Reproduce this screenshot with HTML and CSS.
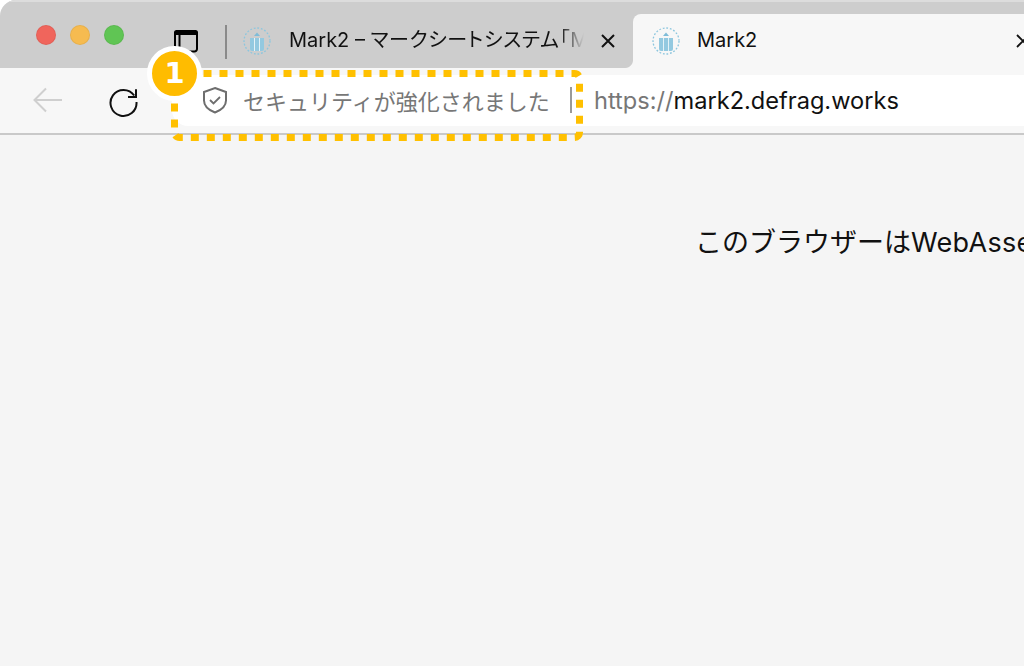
FILE: index.html
```html
<!DOCTYPE html>
<html lang="ja">
<head>
<meta charset="utf-8">
<title>Mark2</title>
<link rel="stylesheet" href="styles.css">
</head>
<body>
<div class="window">
  <header class="tabbar">
    <div class="lights">
      <span class="light red"></span>
      <span class="light yellow"></span>
      <span class="light green"></span>
    </div>
    <svg class="tabs-icon" width="26" height="26" viewBox="0 0 26 26"><path d="M1 7V4.500A2.500 2.500 0 0 1 3.500 2h19A2.500 2.500 0 0 1 25 4.500V7z" fill="#000"/><path d="M2 6v15a2.500 2.500 0 0 0 2.500 2.500h17A2.500 2.500 0 0 0 24 21V6M6.500 6v17.500" fill="none" stroke="#000" stroke-width="2"/></svg>
    <span class="tab-sep"></span>
    <div class="tab inactive">
      <svg class="favicon" width="30" height="30" viewBox="0 0 30 30"><use href="#fav"/></svg>
      <span class="tab-title fade">Mark2 – <span class="tab-ja">マークシートシステム「Mark2」</span></span>
      <svg class="close" width="18" height="18" viewBox="0 0 18 18"><path d="M3 3l12 12M15 3L3 15" stroke="#111" stroke-width="2" fill="none"/></svg>
    </div>
    <div class="tab active">
      <svg class="favicon" width="30" height="30" viewBox="0 0 30 30"><use href="#fav"/></svg>
      <span class="tab-title tab-title-active">Mark2</span>
      <svg class="close" width="18" height="18" viewBox="0 0 18 18"><path d="M3 3l12 12M15 3L3 15" stroke="#111" stroke-width="1.800" fill="none"/></svg>
    </div>
  </header>
  <nav class="toolbar">
    <svg class="nav-back" width="32" height="28" viewBox="0 0 32 28"><path d="M30 14H3M14 2.500L2.500 14 14 25.500" fill="none" stroke="#cfcfcf" stroke-width="2"/></svg>
    <svg class="nav-reload" width="32" height="32" viewBox="0 0 32 32"><path d="M27.200 10.500A13 13 0 1 0 29.500 17" fill="none" stroke="#111" stroke-width="2"/><path d="M29 4.300V12H21" fill="none" stroke="#111" stroke-width="2"/></svg>
    <div class="address">
      <svg class="shield" width="26" height="28" viewBox="0 0 26 28"><path d="M13 2l11 4v8.500c0 5.500-4.500 9.500-11 12-6.500-2.500-11-6.500-11-12V6z" fill="none" stroke="#6e6e6e" stroke-width="2"/><path d="M8 14l3.500 3.500L18 11" fill="none" stroke="#6e6e6e" stroke-width="1.800"/></svg>
      <span class="secure">セキュリティが強化されました</span>
      <span class="addr-sep"></span>
      <span class="url"><span class="scheme">https://</span>mark2.defrag.works</span>
    </div>
  </nav>
  <main class="content">
    <p class="message">このブラウザーは<span class="latin">WebAssembly</span>に対応していません。</p>
  </main>
</div>

<svg class="callout" width="413" height="73" viewBox="0 0 413 73"><rect x="3.500" y="3.500" width="405" height="64" rx="5" fill="none" stroke="#ffc000" stroke-width="7" stroke-dasharray="8 8" stroke-dashoffset="8"/></svg>
<div class="badge">1</div>

<svg class="defs" width="0" height="0">
  <defs>
    <g id="fav">
      <circle cx="15" cy="15" r="13" fill="none" stroke="#8cc6de" stroke-width="1.300" stroke-dasharray="1.800 1.800"/>
      <path d="M15 6.500l3 3.500h-6z" fill="#7fbcd8"/>
      <path d="M8 12h14v11a2 2 0 0 1-2 2H10a2 2 0 0 1-2-2z" fill="#93c9e0"/>
      <path d="M12.500 12v13M17.500 12v13" stroke="#e4f2f7" stroke-width="1"/>
    </g>
  </defs>
</svg>
</body>
</html>
```
FILE: styles.css
```css
* { box-sizing: border-box; }
html, body {
  margin: 0;
  height: 100%;
  background: #fff;
  overflow: hidden;
}
body {
  position: relative;
  width: 1024px;
  height: 666px;
  font-family: Inter, "Liberation Sans", "Noto Sans CJK JP", sans-serif;
  color: #111;
}
.window {
  display: flex;
  flex-direction: column;
  height: 666px;
  border-top-left-radius: 16px;
  overflow: hidden;
  background: #f5f5f5;
}
.tabbar {
  display: flex;
  align-items: stretch;
  height: 68px;
  flex: none;
  padding-left: 36px;
  background: #cdcdcd;
  border-top: 2px solid #dcdcdc;
}
.lights {
  display: flex;
  gap: 14px;
  padding-top: 23px;
  width: 137px;
  flex: none;
}
.light {
  width: 20px;
  height: 20px;
  border-radius: 50%;
  border: 1px solid rgba(0, 0, 0, 0.06);
}
.red { background: #f0655c; }
.yellow { background: #f6bb50; }
.green { background: #60c554; }
.tabs-icon {
  flex: none;
  margin-top: 26px;
}
.tab-sep {
  flex: none;
  width: 2px;
  height: 34px;
  margin: 23px 0 0 26px;
  background: #8a8a8a;
}
.tab {
  display: flex;
  align-items: center;
  flex: none;
  height: 54px;
  margin-top: 12px;
}
.inactive {
  width: 406px;
  padding-left: 15px;
  padding-right: 16px;
}
.active {
  position: relative;
  flex: 1;
  padding-left: 18px;
  margin-right: -8px;
  background: #f7f7f7;
  border-radius: 8px 8px 0 0;
}
.active::before {
  content: "";
  position: absolute;
  left: -8px;
  bottom: 0;
  width: 8px;
  height: 8px;
  background: radial-gradient(circle at 0 0, #cdcdcd 7.500px, #f7f7f7 8.500px);
}
.favicon { flex: none; }
.tab-title {
  font-size: 20px;
  line-height: 26px;
  margin-top: -2px;
  white-space: nowrap;
  overflow: hidden;
  margin-left: 17px;
  flex: 1;
  color: #111;
}
.tab-title-active { margin-left: 16px; }
.tab-ja {
  font-feature-settings: "palt";
  letter-spacing: 0.700px;
}
.fade {
  -webkit-mask-image: linear-gradient(to right, #000 89%, transparent 97%);
  mask-image: linear-gradient(to right, #000 89%, transparent 97%);
}
.close { flex: none; margin-left: 6px; }
.toolbar {
  display: flex;
  align-items: center;
  height: 67px;
  flex: none;
  background: #f7f7f7;
  border-bottom: 2px solid #c9c9c9;
}
.nav-back { flex: none; margin: 0 0 1px 32px; }
.nav-reload { flex: none; margin-left: 43px; }
.address {
  display: flex;
  align-items: center;
  flex: 1;
  height: 51px;
  margin-left: 33px;
  padding-left: 30px;
  padding-bottom: 1px;
  background: #fff;
  border-radius: 16px 0 0 16px;
  white-space: nowrap;
  overflow: hidden;
}
.shield { flex: none; }
.secure {
  flex: none;
  margin-left: 15px;
  font-size: 22px;
  color: #777;
  width: 308px;
}
.addr-sep {
  flex: none;
  width: 2px;
  height: 26px;
  margin-left: 19px;
  background: #9a9a9a;
}
.url {
  flex: none;
  margin-left: 22px;
  font-size: 23.600px;
  color: #111;
}
.scheme { color: #777; }
.content {
  flex: 1;
  overflow: hidden;
  padding: 90px 0 0 695px;
  background: #f5f5f5;
}
.message {
  margin: 0;
  font-size: 27px;
  line-height: 36px;
  white-space: nowrap;
  color: #111;
}
.latin { letter-spacing: 0.300px; }
.callout {
  position: absolute;
  left: 171px;
  top: 70px;
}
.badge {
  position: absolute;
  left: 147px;
  top: 46px;
  width: 55px;
  height: 55px;
  border: 5px solid #fff;
  border-radius: 50%;
  background: #ffbc00;
  color: #fff;
  font-family: "DejaVu Sans", sans-serif;
  font-size: 29px;
  font-weight: 700;
  line-height: 45px;
  text-align: center;
}
.defs { position: absolute; }
```
